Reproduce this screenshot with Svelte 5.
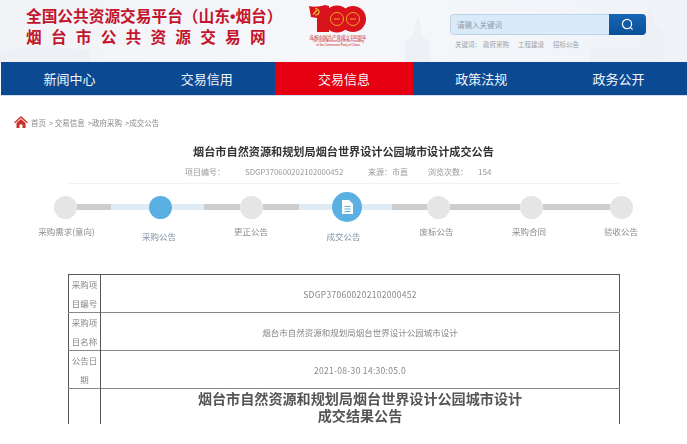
<script>
	const navItems = ['新闻中心', '交易信用', '交易信息', '政策法规', '政务公开'];
	const crumbs = ['首页', '> 交易信息', '>政府采购', '>成交公告'];

	// track pieces between the circles, widths read from the reference
	const track = [
		{ dot: true },
		{ parts: [['grey', 34], ['blue', 38]] },
		{ dot: true, on: true },
		{ parts: [['blue', 32], ['grey', 36]] },
		{ dot: true },
		{ parts: [['grey', 36], ['blue', 33]] },
		{ dot: true, big: true },
		{ parts: [['blue', 30], ['grey', 35]] },
		{ dot: true },
		{ parts: [['grey', 70]] },
		{ dot: true },
		{ parts: [['grey', 67]] },
		{ dot: true }
	];

	const labels = [
		{ text: '采购需求(意向)', w: 93 },
		{ text: '采购公告', w: 92, on: true },
		{ text: '更正公告', w: 92 },
		{ text: '成交公告', w: 93, on: true },
		{ text: '废标公告', w: 93 },
		{ text: '采购合同', w: 92 },
		{ text: '验收公告', w: 92 }
	];

	const rows = [
		{ head: '采购项目编号', value: 'SDGP370600202102000452', latin: true },
		{ head: '采购项目名称', value: '烟台市自然资源和规划局烟台世界设计公园城市设计' },
		{ head: '公告日期', value: '2021-08-30 14:30:05.0', latin: true }
	];
</script>

<div class="page">
	<header class="top">
		<svg class="skyline" viewBox="0 0 687 62" aria-hidden="true">
			<path d="M405 62V40l8-4 5-22 4 22 8 6v20zM640 62V32l6-8 4-20 5 20 8 8v30zM590 62V48h50v14zM0 62V52l30-6 60 4v12z" fill="#edf0f5" />
		</svg>
		<div class="brand">
			<div class="line1">全国公共资源交易平台（山东<span class="bullet">•</span>烟台）</div>
			<div class="line2">烟台市公共资源交易网</div>
		</div>
		<div class="logo">
			<svg width="58" height="30" viewBox="0 0 58 30" aria-hidden="true">
				<path d="M1 2c5 1.500 11 .5 16-1l4 1v26H9V14L3 13z" fill="#d8131c" />
				<circle cx="29" cy="15" r="13.500" fill="#d8131c" />
				<circle cx="45" cy="15" r="13" fill="#d8131c" />
				<circle cx="29" cy="15" r="6.500" fill="none" stroke="#f5a623" stroke-width="1" />
				<circle cx="45" cy="15" r="6.500" fill="none" stroke="#f5a623" stroke-width="1" />
				<path d="M26 15h6M42 15h6" stroke="#f5a623" stroke-width="1" />
				<path d="M7 4.500c2 0 4 1.500 4 3.500s-2 3-4 3M5 10.500L9 6" fill="none" stroke="#f5c242" stroke-width="1.200" />
			</svg>
			<div class="logo-cn">庆祝中国共产党成立100周年</div>
			<div class="logo-en">The 100th Anniversary of the Founding<br />of the Communist Party of China</div>
		</div>
		<div class="search">
			<div class="search-row">
				<div class="search-input">请输入关键词</div>
				<button class="search-btn" aria-label="搜索">
					<svg width="13" height="13" viewBox="0 0 13 13">
						<circle cx="6" cy="6" r="4.600" fill="none" stroke="#fff" stroke-width="1.200" />
						<path d="M9.400 9.400l2.200 2.200" stroke="#fff" stroke-width="1.200" />
					</svg>
				</button>
			</div>
			<div class="keywords">
				<span>关键词：</span><span>政府采购</span><span>工程建设</span><span>招标公告</span>
			</div>
		</div>
	</header>

	<nav class="nav">
		{#each navItems as item, i}
			<div class="nav-item" class:active={i === 2}>{item}</div>
		{/each}
	</nav>

	<div class="crumbs">
		<svg width="14" height="12" viewBox="0 0 14 12" aria-hidden="true">
			<path d="M7 0L0 6.500l1 .8L7 2l6 5.300 1-.8z" fill="#c9302c" />
			<path d="M2.500 7L7 3l4.500 4v5H8.500V8.500h-3V12h-3z" fill="#c9302c" />
		</svg>
		{#each crumbs as c}<span>{c}</span>{/each}
	</div>

	<h1 class="title">烟台市自然资源和规划局烟台世界设计公园城市设计成交公告</h1>

	<div class="meta">
		<span class="m1">项目编号：</span>
		<span class="m2">SDGP370600202102000452</span>
		<span class="m3">来源：市直</span>
		<span class="m4">浏览次数：</span>
		<span class="m5">154</span>
	</div>

	<div class="stepper">
		<div class="track">
			{#each track as t}
				{#if t.dot}
					<div class="dot" class:on={t.on} class:big={t.big}>
						{#if t.big}
							<svg width="11" height="14" viewBox="0 0 11 14" aria-hidden="true">
								<path d="M0 0h7l4 4v10H0z" fill="#fff" />
								<path d="M2.500 6.500h6M2.500 9h6M2.500 11.500h6" stroke="#5aafe3" stroke-width="1" />
							</svg>
						{/if}
					</div>
				{:else}
					{#each t.parts as [tone, w]}
						<div class="seg {tone}" style="width:{w}px"></div>
					{/each}
				{/if}
			{/each}
		</div>
		<div class="labels">
			{#each labels as l}
				<div class="label" class:on={l.on} style="width:{l.w}px">{l.text}</div>
			{/each}
		</div>
	</div>

	<div class="table-wrap">
		<table>
			<tbody>
				{#each rows as r}
					<tr>
						<th>{r.head}</th>
						<td class:latin={r.latin}>{r.value}</td>
					</tr>
				{/each}
				<tr class="last">
					<th></th>
					<td class="notice">烟台市自然资源和规划局烟台世界设计公园城市设计<br />成交结果公告</td>
				</tr>
			</tbody>
		</table>
	</div>
</div>

<style>
	:global(body) {
		margin: 0;
		background: #fff;
	}
	.page {
		width: 687px;
		height: 444px;
		overflow: hidden;
		font-family: 'Noto Sans CJK SC', 'Liberation Sans', sans-serif;
		color: #888;
		filter: blur(0.4px);
	}
	.top {
		position: relative;
		height: 62px;
		background: linear-gradient(90deg, #f1f3f7, #f6f7fa 50%, #eff3f8);
		display: flex;
		box-sizing: border-box;
		padding: 5px 41px 0 26px;
	}
	.skyline {
		position: absolute;
		inset: 0;
		width: 100%;
		height: 100%;
	}
	.brand,
	.logo,
	.search {
		position: relative;
	}
	.brand {
		width: 282px;
		font-weight: 700;
		color: #c3142d;
		font-size: 15.7px;
		white-space: nowrap;
	}
	.line1 {
		height: 21px;
		line-height: 21px;
	}
	.bullet {
		font-family: 'Liberation Sans', sans-serif;
	}
	.line2 {
		height: 22px;
		line-height: 22px;
		letter-spacing: 9.2px;
	}
	.logo {
		width: 60px;
		margin-top: -1px;
		color: #c3142d;
		text-align: center;
	}
	.logo svg {
		display: block;
	}
	.logo-cn {
		font-size: 4.5px;
		line-height: 6px;
		white-space: nowrap;
	}
	.logo-en {
		font-size: 3px;
		line-height: 3.5px;
		white-space: nowrap;
		font-family: 'Liberation Sans', sans-serif;
	}
	.search {
		margin-left: auto;
		margin-top: 9px;
		width: 196px;
	}
	.search-row {
		display: flex;
		height: 21px;
		border-radius: 4px;
		overflow: hidden;
	}
	.search-input {
		flex: 1;
		box-sizing: border-box;
		background: #d9eaf9;
		border: 1px solid #bcd3e8;
		border-right: 0;
		border-radius: 4px 0 0 4px;
		font-size: 7.5px;
		line-height: 19px;
		padding-left: 6px;
		color: #8d9aa6;
	}
	.search-btn {
		width: 37px;
		border: 0;
		padding: 0;
		background: linear-gradient(180deg, #1666b5, #0b4f98);
		display: flex;
		align-items: center;
		justify-content: center;
	}
	.keywords {
		display: flex;
		gap: 9px;
		margin: 3px 0 0 5px;
		font-size: 6.5px;
		line-height: 12px;
		color: #9aa0a8;
	}
	.keywords span:first-child {
		margin-right: -7px;
	}
	.nav {
		margin-left: 1px;
		height: 33px;
		display: grid;
		grid-template-columns: repeat(5, 1fr);
		background: #0b4a92;
		border-bottom: 1px solid #cfe0f0;
	}
	.nav-item {
		color: #f2f5f9;
		font-size: 13px;
		line-height: 33px;
		text-align: center;
	}
	.nav-item.active {
		background: #e50012;
	}
	.crumbs {
		display: flex;
		align-items: center;
		gap: 3px;
		padding: 20px 0 0 14px;
		height: 12px;
		font-size: 7.5px;
		color: #8a8a8a;
	}
	.title {
		margin: 15px 0 0;
		text-align: center;
		font-size: 11.15px;
		line-height: 16px;
		font-weight: 700;
		color: #333;
	}
	.meta {
		display: flex;
		margin: 7px 67px 0 68px;
		padding: 0 0 5px 117px;
		height: 12px;
		border-bottom: 1px solid #f2f2f2;
		font-size: 8px;
		line-height: 12px;
		color: #999;
		white-space: nowrap;
	}
	.m1 { width: 60px; }
	.m2 { width: 123px; font-size: 7.8px; }
	.m3 { width: 60px; }
	.m4 { width: 50px; }
	.stepper {
		margin-top: 8px;
	}
	.track {
		display: flex;
		align-items: center;
		height: 30px;
		padding-left: 54px;
	}
	.dot {
		flex: none;
		width: 23px;
		height: 23px;
		border-radius: 50%;
		background: #e5e5e5;
		display: flex;
		align-items: center;
		justify-content: center;
	}
	.dot.on {
		background: #5aafe3;
	}
	.dot.big {
		width: 30px;
		height: 30px;
		background: #5aafe3;
	}
	.seg {
		flex: none;
		height: 6px;
	}
	.seg.grey {
		background: #cdcdcd;
	}
	.seg.blue {
		background: #dfecf6;
	}
	.labels {
		display: flex;
		padding-left: 20px;
		margin-top: 2px;
	}
	.label {
		flex: none;
		text-align: center;
		font-size: 8.5px;
		line-height: 14px;
		color: #8c8c8c;
		white-space: nowrap;
	}
	.label.on {
		color: #7f93a6;
		padding-top: 5px;
	}
	.table-wrap {
		margin: 31px 0 0 68px;
		width: 552px;
		height: 150px;
		overflow: hidden;
	}
	table {
		width: 552px;
		border-collapse: collapse;
		table-layout: fixed;
		border: 1px solid #555;
		border-bottom: 0;
	}
	th,
	td {
		padding: 0;
		text-align: center;
		font-weight: 400;
		color: #888;
		font-size: 8.5px;
	}
	td.latin {
		letter-spacing: 0.3px;
	}
	tr {
		border-bottom: 1px solid #888;
	}
	tr.last {
		border-bottom: 0;
	}
	th {
		width: 32px;
		height: 37px;
		line-height: 18.5px;
		padding: 0 1px;
		box-sizing: border-box;
		border-right: 1px solid #555;
	}
	td.notice {
		font-size: 14.1px;
		line-height: 17px;
		font-weight: 700;
		color: #555;
		height: 35px;
		white-space: nowrap;
	}
</style>
